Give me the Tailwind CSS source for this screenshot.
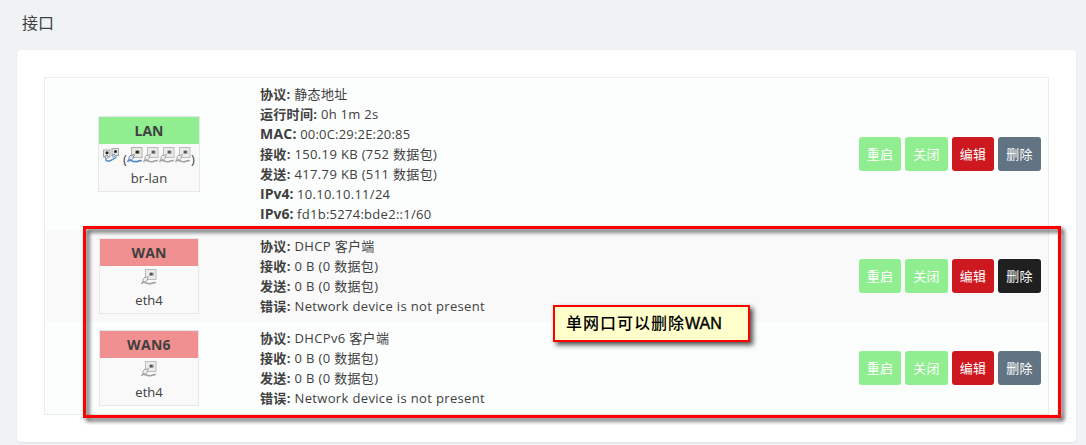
<!DOCTYPE html>
<html lang="zh">
<head>
<meta charset="utf-8">
<title>接口</title>
<script src="https://cdn.jsdelivr.net/npm/@tailwindcss/browser@4"></script>
</head>
<body class="h-[445px] overflow-hidden bg-[#eff3f4] font-['Open_Sans','Noto_Sans_CJK_SC',sans-serif] text-[13px] leading-5 text-[#404040]">
<svg class="hidden">
  <symbol id="port-off" viewBox="0 0 16 16">
    <rect x="4.500" y=".5" width="10.500" height="10" fill="#ebebeb" stroke="#bcbcbc"/>
    <path d="M8 3.500h5v3.500H8z" fill="#bdbdbd"/><circle cx="10.300" cy="5" r="1.600" fill="#555"/>
    <path d="M2 10.200 3.800 8.200 5 8.800 6.700 7l.8 1-1.400 2 .6 1-2.200 2-2.500.2z" fill="#eee" stroke="#999" stroke-width=".9"/>
    <path d="M.6 15c.8-2.200 2-2.300 4-1.300s4.500 1.300 6.400.5 3-.7 3.800-.4" fill="none" stroke="#a2a2a2" stroke-width="1.600"/>
  </symbol>
  <symbol id="port-on" viewBox="0 0 16 16">
    <rect x="4.500" y=".5" width="10.500" height="10" fill="#e9e9e6" stroke="#b0b0b0"/>
    <path d="M8 3.500h5v3.500H8z" fill="#b5b08a"/><circle cx="10.300" cy="5" r="1.600" fill="#222"/>
    <path d="M2 10.200 3.800 8.200 5 8.800 6.700 7l.8 1-1.400 2 .6 1-2.200 2-2.500.2z" fill="#e3eaf2" stroke="#667a90" stroke-width=".9"/>
    <path d="M.6 15c.8-2.200 2-2.300 4-1.300s4.500 1.300 6.400.5 3-.7 3.800-.4" fill="none" stroke="#5289c9" stroke-width="1.700"/>
  </symbol>
  <symbol id="bridge" viewBox="0 0 16 16">
    <rect x=".5" y="3" width="6.500" height="7" fill="#e6e6e3" stroke="#a5a5a5"/>
    <rect x="9" y="1.500" width="6.500" height="7" fill="#e6e6e3" stroke="#a5a5a5"/>
    <circle cx="4" cy="5.800" r="1.500" fill="#222"/><circle cx="12.500" cy="4.500" r="1.500" fill="#222"/>
    <path d="M1.800 9.500 4 8l1.200 1.700-2 2zM9.200 8.500l2-1.500 1.200 1.500-2 2z" fill="#dfe7ef" stroke="#667a90" stroke-width=".8"/>
    <path d="M2.500 11.500c0 3 3.500 3 5.500 1.800S12 12 13.500 9.500" fill="none" stroke="#5289c9" stroke-width="1.400"/>
  </symbol>
</svg>

<h1 class="ml-[22px] flex h-[50px] items-center pb-[5px] text-base">接口</h1>

<main class="ml-[17px] h-[392px] w-[1059px] rounded bg-white px-[27px] pt-[27px] shadow-[0_1px_2px_rgba(0,0,0,0.08)]">
  <div class="w-[1005px] border border-[#ececec] bg-[#fcfefd]">
    <section class="flex h-[152px] items-center pr-[7px]">
      <div class="flex w-[208px] justify-center">
        <div class="h-[76px] w-[102px] border border-[#e5e8ea] bg-[#f9f9f9] text-center">
          <div class="h-[27px] bg-[#90ee90] text-sm leading-[27px] font-bold">LAN</div>
          <div class="mb-0.5 flex h-[22px] items-center justify-center"><svg class="size-4"><use href="#bridge"/></svg><span class="ml-1 w-1 pt-2 leading-4">(</span><svg class="size-4"><use href="#port-on"/></svg><svg class="size-4"><use href="#port-off"/></svg><svg class="size-4"><use href="#port-off"/></svg><svg class="size-4"><use href="#port-off"/></svg><span class="w-1 pt-2 leading-4">)</span></div>
          <div class="tracking-[0.1px]">br-lan</div>
        </div>
      </div>
      <div class="ml-[7px] flex-1 whitespace-nowrap">
        <p class="tracking-[0.3px]"><b>协议:</b> 静态地址</p>
        <p class="tracking-[0.3px]"><b>运行时间:</b> 0h 1m 2s</p>
        <p class="tracking-[0.2px]"><b class="text-sm leading-5">MAC:</b> 00:0C:29:2E:20:85</p>
        <p class="tracking-[0.35px]"><b>接收:</b> 150.19 KB (752 数据包)</p>
        <p class="tracking-[0.35px]"><b>发送:</b> 417.79 KB (511 数据包)</p>
        <p class="tracking-[0.28px]"><b class="text-sm leading-5 tracking-normal">IPv4:</b> 10.10.10.11/24</p>
        <p class="tracking-[0.28px]"><b class="text-sm leading-5 tracking-normal">IPv6:</b> fd1b:5274:bde2::1/60</p>
      </div>
      <div class="flex gap-1 text-[13px] tracking-[0.3px] text-white">
        <button class="h-[34px] w-[42px] rounded-[3px] bg-[#90ee90]">重启</button>
        <button class="h-[34px] w-[43px] rounded-[3px] bg-[#90ee90]">关闭</button>
        <button class="h-[34px] w-[42px] rounded-[3px] bg-[#cc181e]">编辑</button>
        <button class="h-[34px] w-[43px] rounded-[3px] bg-[#627383]">删除</button>
      </div>
    </section>

    <section class="flex h-[92px] items-center bg-[#f9f9f9] pr-[7px]">
      <div class="flex w-[208px] justify-center">
        <div class="h-[76px] w-[100px] border border-[#e5e8ea] bg-[#f9f9f9] text-center">
          <div class="h-[27px] bg-[#f09090] text-sm leading-[27px] font-bold tracking-[0.2px]">WAN</div>
          <div class="mb-0.5 flex h-[22px] items-center justify-center"><svg class="size-4"><use href="#port-off"/></svg></div>
          <div>eth4</div>
        </div>
      </div>
      <div class="ml-[7px] flex-1 tracking-[0.35px] whitespace-nowrap">
        <p><b>协议:</b> DHCP 客户端</p>
        <p><b>接收:</b> 0 B (0 数据包)</p>
        <p><b>发送:</b> 0 B (0 数据包)</p>
        <p><b>错误:</b> Network device is not present</p>
      </div>
      <div class="flex gap-1 text-[13px] tracking-[0.3px] text-white">
        <button class="h-[34px] w-[42px] rounded-[3px] bg-[#90ee90]">重启</button>
        <button class="h-[34px] w-[43px] rounded-[3px] bg-[#90ee90]">关闭</button>
        <button class="h-[34px] w-[42px] rounded-[3px] bg-[#cc181e]">编辑</button>
        <button class="h-[34px] w-[43px] rounded-[3px] bg-[#202020]">删除</button>
      </div>
    </section>

    <section class="flex h-[92px] items-center pr-[7px]">
      <div class="flex w-[208px] justify-center">
        <div class="h-[76px] w-[100px] border border-[#e5e8ea] bg-[#f9f9f9] text-center">
          <div class="h-[27px] bg-[#f09090] text-sm leading-[27px] font-bold tracking-[0.3px]">WAN6</div>
          <div class="mb-0.5 flex h-[22px] items-center justify-center"><svg class="size-4"><use href="#port-off"/></svg></div>
          <div>eth4</div>
        </div>
      </div>
      <div class="ml-[7px] flex-1 tracking-[0.35px] whitespace-nowrap">
        <p><b>协议:</b> DHCPv6 客户端</p>
        <p><b>接收:</b> 0 B (0 数据包)</p>
        <p><b>发送:</b> 0 B (0 数据包)</p>
        <p><b>错误:</b> Network device is not present</p>
      </div>
      <div class="flex gap-1 text-[13px] tracking-[0.3px] text-white">
        <button class="h-[34px] w-[42px] rounded-[3px] bg-[#90ee90]">重启</button>
        <button class="h-[34px] w-[43px] rounded-[3px] bg-[#90ee90]">关闭</button>
        <button class="h-[34px] w-[42px] rounded-[3px] bg-[#cc181e]">编辑</button>
        <button class="h-[34px] w-[43px] rounded-[3px] bg-[#627383]">删除</button>
      </div>
    </section>
  </div>
</main>

<div class="pointer-events-none absolute top-[226px] left-[83px] h-[192px] w-[978px] border-3 border-[#ff0000] [filter:drop-shadow(3px_3px_2px_rgba(0,0,0,0.75))]"></div>
<div class="absolute top-[305px] left-[553px] h-[37px] w-[197px] border-2 border-[#ff0000] bg-[#ffffcc] pl-[11px] font-['Liberation_Sans','Noto_Sans_CJK_SC',sans-serif] text-base leading-[33px] whitespace-nowrap text-black shadow-[3px_3px_5px_rgba(0,0,0,0.7)]"><span class="font-medium tracking-[1px]">单网口可以删除</span><span class="[-webkit-text-stroke:0.4px_black]">WAN</span></div>
</body>
</html>
